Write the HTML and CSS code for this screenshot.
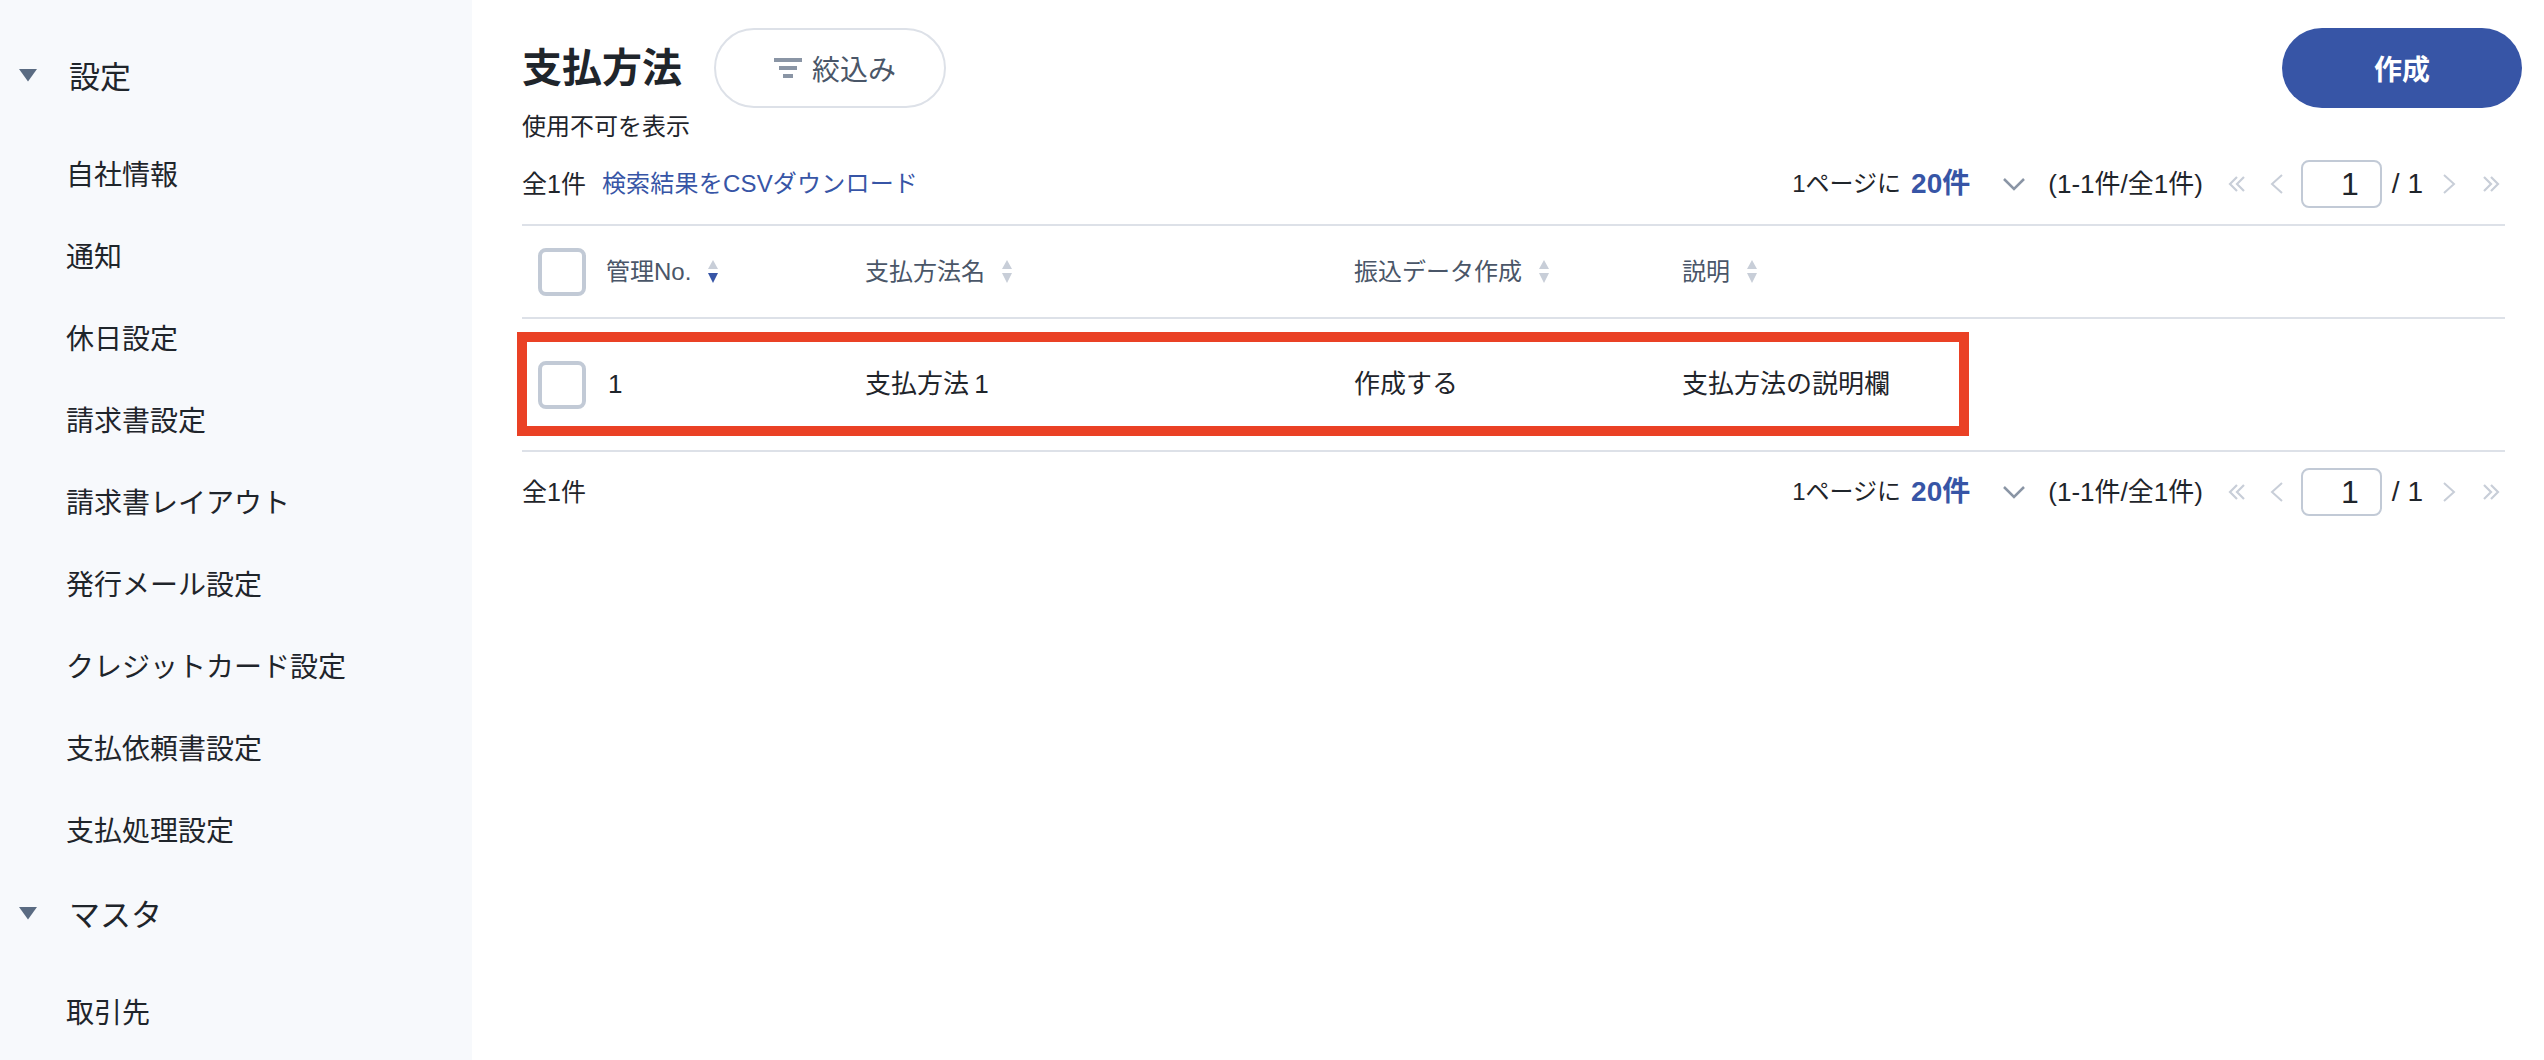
FILE: index.html
```html
<!DOCTYPE html>
<html lang="ja">
<head>
    <meta charset="UTF-8">
    <title>支払方法</title>
    <link rel="stylesheet" href="styles.css">
</head>
<body>
    <aside class="sidebar">
        <div class="nav-group">
            <div class="nav-group-title">
                <svg class="nav-caret" viewBox="0 0 18 14"><path d="M0 1h18L9 13.5z"/></svg>
                <span>設定</span>
            </div>
            <a class="nav-item">自社情報</a>
            <a class="nav-item">通知</a>
            <a class="nav-item">休日設定</a>
            <a class="nav-item">請求書設定</a>
            <a class="nav-item">請求書レイアウト</a>
            <a class="nav-item">発行メール設定</a>
            <a class="nav-item">クレジットカード設定</a>
            <a class="nav-item">支払依頼書設定</a>
            <a class="nav-item">支払処理設定</a>
        </div>
        <div class="nav-group">
            <div class="nav-group-title">
                <svg class="nav-caret" viewBox="0 0 18 14"><path d="M0 1h18L9 13.5z"/></svg>
                <span>マスタ</span>
            </div>
            <a class="nav-item">取引先</a>
        </div>
    </aside>

    <main class="main">
        <div class="page-header">
            <h1>支払方法</h1>
            <button class="filter-button">
                <svg class="filter-icon" viewBox="0 0 28 20"><path d="M0 0h28v4H0zM5 8h18v4H5zM9 16h10v4H9z"/></svg>
                絞込み
            </button>
            <button class="create-button">作成</button>
        </div>

        <div class="content">
            <p class="disabled-toggle">使用不可を表示</p>

            <div class="list-bar">
                <span class="count">全1件</span>
                <a class="csv-link">検索結果をCSVダウンロード</a>
                <div class="pager">
                    <span>1ページに</span>
                    <strong class="per-page">20件</strong>
                    <svg class="chevron-down" viewBox="0 0 24 14"><path d="M2 2l10 10L22 2"/></svg>
                    <span class="range">(1-1件/全1件)</span>
                    <svg class="pager-double first" viewBox="0 0 18 16"><path d="M9 1L2 8l7 7M16 1L9 8l7 7"/></svg>
                    <svg class="pager-single prev" viewBox="0 0 15 20"><path d="M13 1L3 10l10 9"/></svg>
                    <div class="page-input">1</div>
                    <span class="page-total">/ 1</span>
                    <svg class="pager-single next" viewBox="0 0 15 20"><path d="M2 1l10 9-10 9"/></svg>
                    <svg class="pager-double last" viewBox="0 0 18 16"><path d="M2 1l7 7-7 7M9 1l7 7-7 7"/></svg>
                </div>
            </div>

            <div class="table">
                <div class="table-row table-head">
                    <div class="cell-check"><span class="checkbox"></span></div>
                    <div class="head-cell">管理No.
                        <svg class="sort" viewBox="0 0 10 24"><path class="sort-off" d="M5 0l5 9H0z"/><path class="sort-on" d="M0 13h10l-5 10z"/></svg>
                    </div>
                    <div class="head-cell">支払方法名
                        <svg class="sort" viewBox="0 0 10 24"><path class="sort-off" d="M5 0l5 9H0zM0 13h10l-5 10z"/></svg>
                    </div>
                    <div class="head-cell">振込データ作成
                        <svg class="sort" viewBox="0 0 10 24"><path class="sort-off" d="M5 0l5 9H0zM0 13h10l-5 10z"/></svg>
                    </div>
                    <div class="head-cell">説明
                        <svg class="sort" viewBox="0 0 10 24"><path class="sort-off" d="M5 0l5 9H0zM0 13h10l-5 10z"/></svg>
                    </div>
                </div>
                <div class="table-row table-body">
                    <div class="cell-check"><span class="checkbox"></span></div>
                    <div class="cell-no">1</div>
                    <div>支払方法&#8201;1</div>
                    <div>作成する</div>
                    <div>支払方法の説明欄</div>
                    <div class="highlight-box"></div>
                </div>
            </div>

            <div class="list-bar list-bar-bottom">
                <span class="count">全1件</span>
                <div class="pager">
                    <span>1ページに</span>
                    <strong class="per-page">20件</strong>
                    <svg class="chevron-down" viewBox="0 0 24 14"><path d="M2 2l10 10L22 2"/></svg>
                    <span class="range">(1-1件/全1件)</span>
                    <svg class="pager-double first" viewBox="0 0 18 16"><path d="M9 1L2 8l7 7M16 1L9 8l7 7"/></svg>
                    <svg class="pager-single prev" viewBox="0 0 15 20"><path d="M13 1L3 10l10 9"/></svg>
                    <div class="page-input">1</div>
                    <span class="page-total">/ 1</span>
                    <svg class="pager-single next" viewBox="0 0 15 20"><path d="M2 1l10 9-10 9"/></svg>
                    <svg class="pager-double last" viewBox="0 0 18 16"><path d="M2 1l7 7-7 7M9 1l7 7-7 7"/></svg>
                </div>
            </div>
        </div>
    </main>
</body>
</html>
```

FILE: styles.css
```css
:root {
    --text: #1f252b;
    --text-sub: #4a5668;
    --primary: #3755a6;
    --line: #dde1e8;
    --control: #c2cad6;
    --icon: #8a95a5;
    --icon-light: #c8ced8;
    --sidebar-bg: #f7f9fc;
}

html, body {
    height: 100%;
}

body {
    margin: 0;
    display: flex;
    overflow: hidden;
    background: #fff;
    color: var(--text);
    font-family: "Liberation Sans", "Noto Sans CJK JP", sans-serif;
    font-size: 24px;
    line-height: 1.4;
}

.sidebar {
    width: 472px;
    flex-shrink: 0;
    height: 1060px;
    overflow: hidden;
    padding-top: 34px;
    box-sizing: border-box;
    background: var(--sidebar-bg);
}

.nav-group {
    margin-top: 14px;
}

.nav-group-title {
    display: flex;
    align-items: center;
    height: 60px;
    margin-bottom: 26px;
    font-size: 31px;
}

.nav-caret {
    width: 18px;
    height: 14px;
    margin: -6px 32px 0 19px;
    fill: #5a6b82;
}

.nav-item {
    display: flex;
    align-items: center;
    box-sizing: border-box;
    height: 82px;
    padding: 2px 0 0 66px;
    font-size: 28px;
}

.main {
    flex: 1;
    min-width: 0;
    padding: 28px 22px 0 50px;
}

.page-header {
    display: flex;
    align-items: center;
    height: 80px;
}

h1 {
    margin: 0 32px 0 0;
    font-size: 40px;
    font-weight: 700;
}

.filter-button {
    display: flex;
    align-items: center;
    gap: 10px;
    width: 232px;
    height: 80px;
    padding: 0 0 0 58px;
    border: 2px solid var(--line);
    border-radius: 40px;
    background: #fff;
    color: var(--text-sub);
    font-family: inherit;
    font-size: 28px;
}

.filter-icon {
    width: 28px;
    height: 20px;
    fill: var(--icon);
}

.create-button {
    width: 240px;
    height: 80px;
    margin-left: auto;
    border: none;
    border-radius: 40px;
    background: var(--primary);
    color: #fff;
    font-family: inherit;
    font-size: 28px;
    font-weight: 700;
}

.content {
    margin-right: 17px;
}

.disabled-toggle {
    margin: 2px 0 0;
    line-height: 34px;
}

.list-bar {
    display: flex;
    align-items: center;
    height: 48px;
    margin-top: 16px;
    padding-bottom: 16px;
}

.list-bar-bottom {
    margin-top: 0;
    padding: 16px 0 0;
}

.count {
    font-size: 25px;
}

.csv-link {
    margin-left: 16px;
    color: var(--primary);
    letter-spacing: 0.2px;
}

.pager {
    display: flex;
    align-items: center;
    margin-left: auto;
    margin-right: 5px;
}

.per-page {
    margin-left: 10px;
    color: var(--primary);
    font-size: 28px;
}

.chevron-down {
    width: 24px;
    height: 14px;
    margin: 0 22px 0 32px;
    fill: none;
    stroke: var(--icon);
    stroke-width: 2.5;
}

.range {
    font-size: 26px;
}

.pager-double {
    width: 18px;
    height: 16px;
    fill: none;
    stroke: var(--icon-light);
    stroke-width: 2.2;
}

.pager-single {
    width: 15px;
    height: 20px;
    fill: none;
    stroke: var(--icon-light);
    stroke-width: 2;
}

.first {
    margin-left: 25px;
}

.prev {
    margin-left: 23px;
}

.page-input {
    width: 81px;
    height: 48px;
    margin-left: 17px;
    padding-right: 21px;
    box-sizing: border-box;
    border: 2px solid var(--control);
    border-radius: 8px;
    text-align: right;
    font-size: 32px;
    line-height: 44px;
}

.page-total {
    margin-left: 10px;
    font-size: 28px;
}

.next {
    margin-left: 19px;
}

.last {
    margin-left: 25px;
}

.table-row {
    display: grid;
    grid-template-columns: 84px 259px 489px 328px 1fr;
    align-items: center;
    border-top: 2px solid var(--line);
}

.table-head {
    height: 91px;
    color: var(--text-sub);
}

.table-body {
    position: relative;
    height: 131px;
    border-bottom: 2px solid var(--line);
    font-size: 26px;
}

.head-cell {
    display: flex;
    align-items: center;
    gap: 17px;
}

.cell-check {
    padding-left: 16px;
    display: flex;
}

.cell-no {
    padding-left: 2px;
}

.checkbox {
    width: 48px;
    height: 48px;
    box-sizing: border-box;
    border: 4px solid var(--control);
    border-radius: 8px;
    background: #fff;
}

.sort {
    width: 10px;
    height: 24px;
}

.sort-off {
    fill: var(--icon-light);
}

.sort-on {
    fill: var(--primary);
}

.highlight-box {
    position: absolute;
    left: -5px;
    top: 13px;
    width: 1452px;
    height: 104px;
    box-sizing: border-box;
    border: 10px solid #ea4125;
}
```
